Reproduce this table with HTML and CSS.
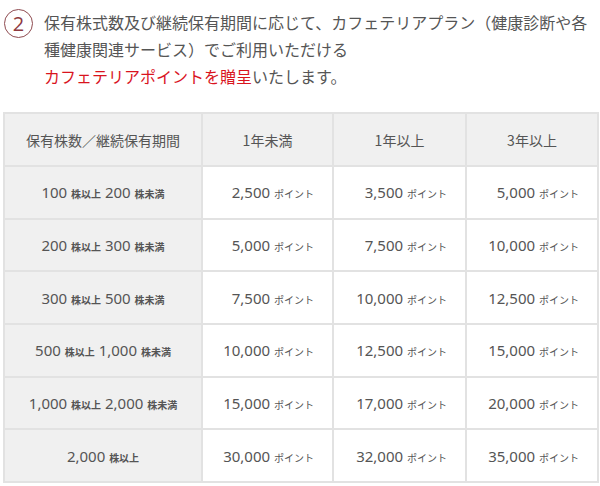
FILE: index.html
```html
<!DOCTYPE html>
<html lang="ja">
<head>
<meta charset="utf-8">
<link rel="stylesheet" href="styles.css">
</head>
<body>
<div class="intro">
  <div class="num">2</div>
  <p class="lead">保有株式数及び継続保有期間に応じて、カフェテリアプラン（健康診断や各<br>種健康関連サービス）でご利用いただける<br><span class="red">カフェテリアポイントを贈呈</span>いたします。</p>
</div>
<table class="pts">
  <colgroup><col class="c1"><col class="c2"><col class="c3"><col class="c4"></colgroup>
  <thead>
    <tr><th>保有株数／継続保有期間</th><th>1年未満</th><th>1年以上</th><th>3年以上</th></tr>
  </thead>
  <tbody>
    <tr><th>100 <small>株以上</small> 200 <small>株未満</small></th><td>2,500 <small>ポイント</small></td><td>3,500 <small>ポイント</small></td><td>5,000 <small>ポイント</small></td></tr>
    <tr><th>200 <small>株以上</small> 300 <small>株未満</small></th><td>5,000 <small>ポイント</small></td><td>7,500 <small>ポイント</small></td><td>10,000 <small>ポイント</small></td></tr>
    <tr><th>300 <small>株以上</small> 500 <small>株未満</small></th><td>7,500 <small>ポイント</small></td><td>10,000 <small>ポイント</small></td><td>12,500 <small>ポイント</small></td></tr>
    <tr><th>500 <small>株以上</small> 1,000 <small>株未満</small></th><td>10,000 <small>ポイント</small></td><td>12,500 <small>ポイント</small></td><td>15,000 <small>ポイント</small></td></tr>
    <tr><th>1,000 <small>株以上</small> 2,000 <small>株未満</small></th><td>15,000 <small>ポイント</small></td><td>17,000 <small>ポイント</small></td><td>20,000 <small>ポイント</small></td></tr>
    <tr><th>2,000 <small>株以上</small></th><td>30,000 <small>ポイント</small></td><td>32,000 <small>ポイント</small></td><td>35,000 <small>ポイント</small></td></tr>
  </tbody>
</table>
</body>
</html>
```

FILE: styles.css
```css
html, body {
  margin: 0;
  padding: 0;
  background: #fff;
}
body {
  font-family: "Noto Sans", "Noto Sans CJK JP", sans-serif;
  color: #555;
}
.intro {
  display: flex;
  align-items: flex-start;
  padding: 9px 0 0 4px;
}
.num {
  flex: none;
  width: 27px;
  height: 27px;
  border: 1.5px solid #8e4a4f;
  border-radius: 50%;
  color: #8e3a40;
  font-family: "Open Sans", "Noto Sans", sans-serif;
  font-size: 20px;
  line-height: 27px;
  text-align: center;
}
.lead {
  margin: 0 0 0 11px;
  font-family: "Noto Sans CJK JP", sans-serif;
  font-size: 16px;
  line-height: 27px;
  color: #555;
  white-space: nowrap;
}
.red {
  color: #d9141e;
}
.pts {
  margin: 22px 0 0 3px;
  width: 594px;
  border-collapse: collapse;
  table-layout: fixed;
}
.c1 { width: 198px; }
.c2 { width: 131px; }
.c3 { width: 133px; }
.c4 { width: 132px; }
.pts th, .pts td {
  border: 2px solid #e2e2e2;
  font-weight: 400;
  padding: 0;
  height: 50.7px;
  color: #555;
  font-size: 15px;
  white-space: nowrap;
}
.pts thead th {
  background: #f0f0f0;
  font-family: "Noto Sans CJK JP", sans-serif;
  font-size: 14px;
  height: 51px;
  text-align: center;
}
.pts tbody th {
  background: #f0f0f0;
  text-align: center;
}
.pts td {
  text-align: right;
  padding-right: 18px;
}
.pts small {
  font-family: "Noto Sans CJK JP", sans-serif;
  font-size: 10px;
  font-weight: 700;
  color: #555;
}
.pts td small {
  font-weight: 400;
}
```
